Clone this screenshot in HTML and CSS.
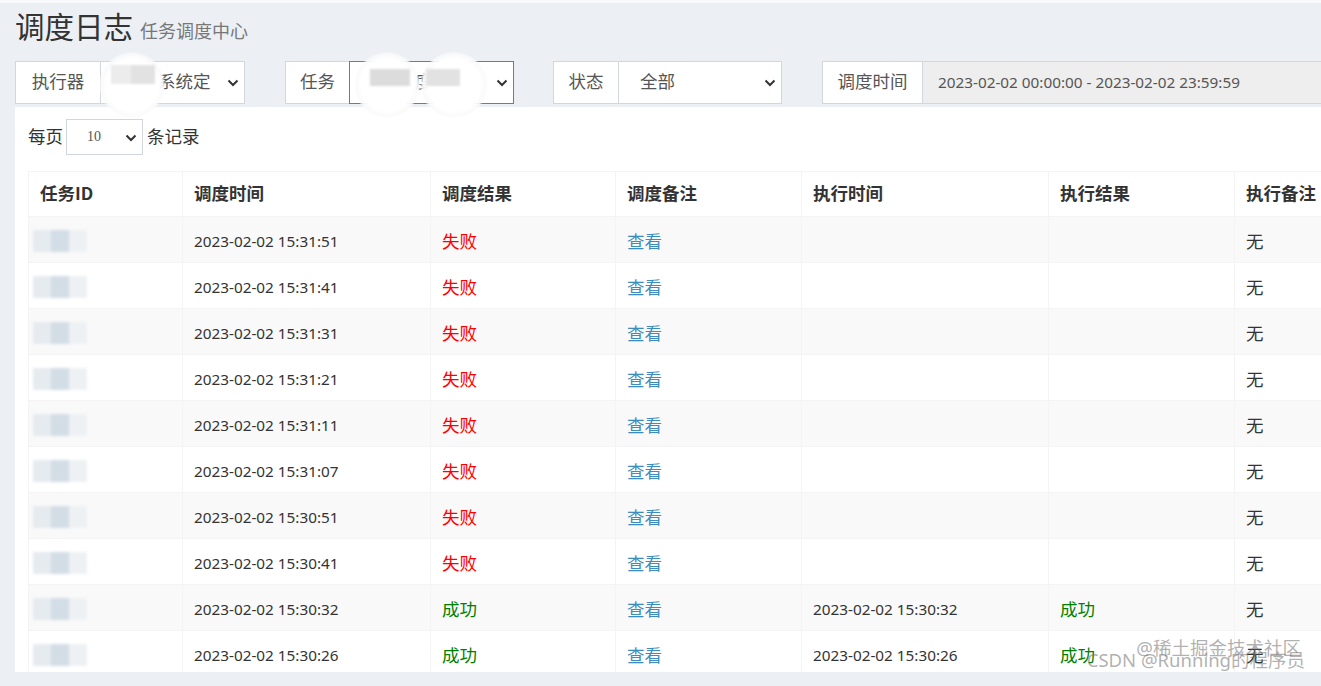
FILE: index.html
```html
<!DOCTYPE html>
<html lang="zh">
<head>
<meta charset="utf-8">
<title>调度日志</title>
<link rel="stylesheet" href="styles.css">
</head>
<body>
<div class="page">
  <section class="content-header">
    <h1>调度日志<small>任务调度中心</small></h1>
  </section>
  <section class="content">
    <div class="filters">
      <div class="group g1">
        <span class="addon a1">执行器</span>
        <div class="select s1">
          <span class="val v1">系统定</span>
          <span class="blob blob-a"><span class="mask ma"></span></span>
          <svg class="chev" viewBox="0 0 12 8" width="12" height="8"><path d="M1.5 1.5 L6 6 L10.5 1.5" fill="none" stroke="#333" stroke-width="2"/></svg>
        </div>
      </div>
      <div class="group g2">
        <span class="addon a2">任务</span>
        <div class="select s2 focus">
          <span class="val v2">度</span>
          <span class="blob blob-b"><span class="mask mb"></span></span>
          <span class="blob blob-c"><span class="mask mc"></span></span>
          <svg class="chev" viewBox="0 0 12 8" width="12" height="8"><path d="M1.5 1.5 L6 6 L10.5 1.5" fill="none" stroke="#333" stroke-width="2"/></svg>
        </div>
      </div>
      <div class="group g3">
        <span class="addon a3">状态</span>
        <div class="select s3">
          <span class="val">全部</span>
          <svg class="chev" viewBox="0 0 12 8" width="12" height="8"><path d="M1.5 1.5 L6 6 L10.5 1.5" fill="none" stroke="#333" stroke-width="2"/></svg>
        </div>
      </div>
      <div class="group g4">
        <span class="addon a4">调度时间</span>
        <div class="input">2023-02-02 00:00:00 - 2023-02-02 23:59:59</div>
      </div>
    </div>

    <div class="box">
      <div class="length">
        <span>每页</span>
        <div class="mini-select">
          <span class="num">10</span>
          <svg class="chev" viewBox="0 0 12 8" width="12" height="8"><path d="M1.5 1.5 L6 6 L10.5 1.5" fill="none" stroke="#333" stroke-width="2"/></svg>
        </div>
        <span>条记录</span>
      </div>
      <table class="grid">
        <colgroup>
          <col class="c1"><col class="c2"><col class="c3"><col class="c4"><col class="c5"><col class="c6"><col class="c7">
        </colgroup>
        <thead>
          <tr><th>任务ID</th><th>调度时间</th><th>调度结果</th><th>调度备注</th><th>执行时间</th><th>执行结果</th><th>执行备注</th></tr>
        </thead>
        <tbody>
          <tr><td><span class="idblur"></span></td><td class="t">2023-02-02 15:31:51</td><td class="fail">失败</td><td class="link">查看</td><td class="t"></td><td></td><td class="cn">无</td></tr>
          <tr><td><span class="idblur"></span></td><td class="t">2023-02-02 15:31:41</td><td class="fail">失败</td><td class="link">查看</td><td class="t"></td><td></td><td class="cn">无</td></tr>
          <tr><td><span class="idblur"></span></td><td class="t">2023-02-02 15:31:31</td><td class="fail">失败</td><td class="link">查看</td><td class="t"></td><td></td><td class="cn">无</td></tr>
          <tr><td><span class="idblur"></span></td><td class="t">2023-02-02 15:31:21</td><td class="fail">失败</td><td class="link">查看</td><td class="t"></td><td></td><td class="cn">无</td></tr>
          <tr><td><span class="idblur"></span></td><td class="t">2023-02-02 15:31:11</td><td class="fail">失败</td><td class="link">查看</td><td class="t"></td><td></td><td class="cn">无</td></tr>
          <tr><td><span class="idblur"></span></td><td class="t">2023-02-02 15:31:07</td><td class="fail">失败</td><td class="link">查看</td><td class="t"></td><td></td><td class="cn">无</td></tr>
          <tr><td><span class="idblur"></span></td><td class="t">2023-02-02 15:30:51</td><td class="fail">失败</td><td class="link">查看</td><td class="t"></td><td></td><td class="cn">无</td></tr>
          <tr><td><span class="idblur"></span></td><td class="t">2023-02-02 15:30:41</td><td class="fail">失败</td><td class="link">查看</td><td class="t"></td><td></td><td class="cn">无</td></tr>
          <tr><td><span class="idblur"></span></td><td class="t">2023-02-02 15:30:32</td><td class="ok">成功</td><td class="link">查看</td><td class="t">2023-02-02 15:30:32</td><td class="ok">成功</td><td class="cn">无</td></tr>
          <tr><td><span class="idblur"></span></td><td class="t">2023-02-02 15:30:26</td><td class="ok">成功</td><td class="link">查看</td><td class="t">2023-02-02 15:30:26</td><td class="ok">成功</td><td class="cn">无</td></tr>
        </tbody>
      </table>
    </div>
  </section>
  <div class="watermark">
    <span class="wm1">@稀土掘金技术社区</span>
    <span class="wm2">CSDN @Running的程序员</span>
  </div>
</div>
</body>
</html>
```

FILE: styles.css
```css
* { box-sizing: border-box; }
html, body { margin: 0; padding: 0; }
body {
  background: #ecf0f5;
  font-family: "Noto Sans", "Noto Sans CJK SC", sans-serif;
  color: #333;
  overflow: hidden;
  width: 1321px;
  height: 686px;
}
.page {
  position: relative;
  width: 1321px;
  height: 686px;
  border-top: 3px solid #f8f9fb;
  overflow: hidden;
}
.content-header { padding: 3px 15px 0 15px; height: 58px; }
.content-header h1 {
  margin: 0;
  font-size: 29.5px;
  font-weight: 400;
  color: #333;
  line-height: 38px;
  font-family: "Noto Sans CJK SC", sans-serif;
}
.content-header h1 small {
  font-size: 18px;
  color: #777;
  margin-left: 7px;
  font-weight: 400;
}

.filters {
  display: flex;
  padding-left: 15px;
  height: 43px;
}
.group {
  display: flex;
  height: 43px;
  flex: none;
}
.g1 { width: 230px; }
.g2 { width: 229px; margin-left: 40px; }
.g3 { width: 229px; margin-left: 39px; }
.g4 { width: 520px; margin-left: 40px; }
.addon {
  flex: none;
  display: flex;
  align-items: center;
  justify-content: center;
  background: #fff;
  border: 1px solid #d2d6de;
  border-right: none;
  color: #555;
  font-size: 17.5px;
  padding-bottom: 4px;
  font-family: "Noto Sans CJK SC", sans-serif;
}
.a1 { width: 85px; }
.a2 { width: 64px; }
.a3 { width: 65px; }
.a4 { width: 100px; }
.select {
  position: relative;
  flex: 1;
  display: flex;
  align-items: center;
  background: #fff;
  border: 1px solid #d2d6de;
  padding-left: 21px;
  padding-bottom: 4px;
  color: #555;
  font-size: 17.5px;
  font-family: "Noto Sans CJK SC", sans-serif;
}
.select.focus { border-color: #3c8dbc; }
.select .chev {
  position: absolute;
  right: 5px;
  top: 17px;
}
.v1 { margin-left: 36px; }
.v2 { margin-left: 44px; }
.blob {
  position: absolute;
  border-radius: 50%;
  background: radial-gradient(circle, rgba(255,255,255,1) 0 55%, rgba(250,250,251,0.9) 66%, rgba(255,255,255,0) 72%);
}
.mask {
  position: absolute;
  background: #e3e3e4;
  filter: blur(1px);
}
.blob-a { left: -2px; top: -10px; width: 66px; height: 66px; }
.ma { left: 12px; top: 13px; width: 44px; height: 19px; background: linear-gradient(90deg, #ececed 0 45%, #e2e2e3 45% 100%); }
.blob-b { left: 4px; top: -10px; width: 66px; height: 66px; }
.mb { left: 16px; top: 17px; width: 40px; height: 17px; background: #dcdcdc; }
.blob-c { left: 70px; top: -10px; width: 68px; height: 66px; }
.mc { left: 6px; top: 17px; width: 34px; height: 17px; background: #e2e2e2; }
.input {
  flex: 1;
  display: flex;
  align-items: center;
  background: #eee;
  border: 1px solid #d2d6de;
  padding-left: 15px;
  padding-bottom: 2px;
  color: #555;
  font-size: 15.3px;
  white-space: nowrap;
}

.box {
  margin: 3px 0 0 15px;
  width: 1306px;
  height: 565px;
  background: #fff;
  padding: 12px 0 0 13px;
  overflow: hidden;
}
.length {
  display: flex;
  align-items: center;
  height: 36px;
  font-size: 17.5px;
  color: #333;
  font-family: "Noto Sans CJK SC", sans-serif;
}
.length > span { padding-bottom: 4px; }
.mini-select {
  position: relative;
  width: 77px;
  height: 36px;
  margin: 0 4px 0 3px;
  border: 1px solid #d2d6de;
  display: flex;
  align-items: center;
  padding-left: 20px;
}
.mini-select .num {
  font-family: "Liberation Serif", serif;
  font-size: 14px;
  color: #555;
}
.mini-select .chev { position: absolute; right: 5px; top: 14px; }

.grid {
  margin-top: 16px;
  border-collapse: collapse;
  table-layout: fixed;
  width: 1420px;
}
.c1 { width: 154px; }
.c2 { width: 248px; }
.c3 { width: 185px; }
.c4 { width: 186px; }
.c5 { width: 247px; }
.c6 { width: 186px; }
.c7 { width: 214px; }
.grid th {
  height: 45px;
  text-align: left;
  padding: 0 11px 4px 11px;
  font-size: 17.5px;
  font-weight: 700;
  color: #333;
  border: 1px solid #f4f4f4;
  border-bottom: none;
  font-family: "Noto Sans CJK SC", sans-serif;
}
.grid td {
  height: 46px;
  padding: 2px 11px 0 11px;
  border: 1px solid #f4f4f4;
  font-size: 17.5px;
  color: #333;
  font-family: "Noto Sans CJK SC", sans-serif;
  white-space: nowrap;
}
.grid tbody tr:nth-child(odd) td { background: #f9f9f9; }
.grid td.t {
  font-family: "Noto Sans", sans-serif;
  font-size: 15.3px;
}
.fail { color: #f00 !important; }
.ok { color: #008000 !important; }
.link { color: #3c8dbc !important; }
.idblur {
  display: block;
  margin-left: -7px;
  width: 54px;
  height: 22px;
  background: linear-gradient(90deg, #e6ebf0 0 33%, #d3dde6 33% 66%, #eef1f4 66% 100%);
  filter: blur(1.5px);
}

.watermark {
  position: absolute;
  right: 16px;
  bottom: 8px;
  width: 230px;
  height: 44px;
  font-family: "Noto Sans", "Noto Sans CJK SC", sans-serif;
  font-size: 18.5px;
  color: rgba(110, 110, 110, 0.55);
  pointer-events: none;
}
.wm1 { position: absolute; right: 4px; top: 0; white-space: nowrap; }
.wm2 { position: absolute; right: 0; top: 12px; white-space: nowrap; }
```
